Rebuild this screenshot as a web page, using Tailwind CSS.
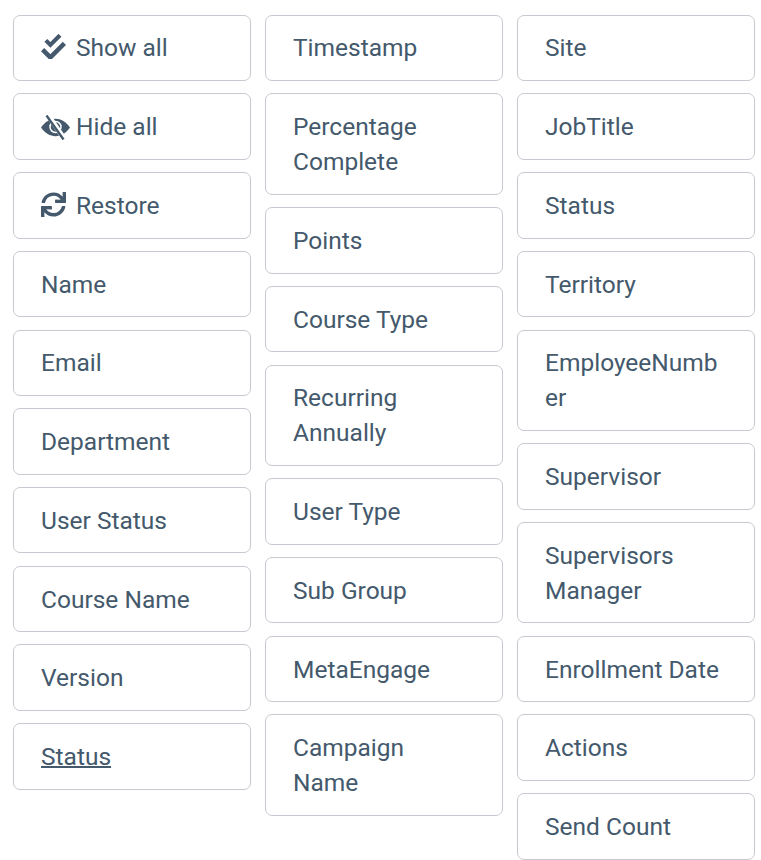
<!DOCTYPE html>
<html lang="en">
<head>
  <meta charset="UTF-8">
  <title>Columns</title>
  <script src="https://cdn.jsdelivr.net/npm/@tailwindcss/browser@4"></script>
</head>
<body class="bg-white font-['Roboto',sans-serif] text-[24.5px] leading-[35px] text-[#44596c]">
  <div class="flex items-start gap-[14px] pl-[13px] pt-[14.74px]">

    <!-- column 1 -->
    <div class="flex w-[238px] flex-col gap-[12.23px]">
      <div class="rounded-[7px] border border-[#c8c8d0] pt-[14.4px] pb-[15.1px] px-[27px]">
        <svg class="mr-[10px] inline-block h-[25px] w-[25px] align-[-3px]" viewBox="0 0 512 512" fill="none" stroke="currentColor"><path stroke-width="92" d="M32 320l160 160 288-288"/><path stroke-width="84" d="M100 130l92 92 196-196"/></svg>Show all
      </div>
      <div class="rounded-[7px] border border-[#c8c8d0] pt-[14.92px] pb-[14.58px] px-[27px]">
        <svg class="mr-[6px] inline-block h-[25px] w-[29px] align-[-5px]" viewBox="0 0 29 25"><path fill="currentColor" d="M0 12.5C4 7 9 3.8 14.5 3.8S25 7 29 12.5C25 18 20 21.2 14.5 21.2S4 18 0 12.5z"/><circle cx="14.5" cy="12" r="5.5" fill="none" stroke="white" stroke-width="1.5"/><path fill="none" stroke="white" stroke-width="5" d="M7 0l17 25"/><path fill="none" stroke="currentColor" stroke-width="2.4" d="M5.5 .5l17 24"/></svg>Hide all
      </div>
      <div class="rounded-[7px] border border-[#c8c8d0] pt-[14.92px] pb-[14.58px] px-[27px]">
        <svg class="mr-[10px] inline-block h-[25px] w-[25px] align-[-3px]" viewBox="0 0 512 512" fill="currentColor"><path d="M440.65 12.57l4 82.77A247.16 247.16 0 0 0 255.83 8C134.73 8 33.91 94.92 12.29 209.82A12 12 0 0 0 24.09 224h49.05a12 12 0 0 0 11.67-9.26 175.91 175.91 0 0 1 317-56.94l-101.46-4.86a12 12 0 0 0-12.57 12v47.41a12 12 0 0 0 12 12H500a12 12 0 0 0 12-12V12a12 12 0 0 0-12-12h-47.37a12 12 0 0 0-11.98 12.57zM255.83 432a175.61 175.61 0 0 1-146-77.8l101.8 4.87a12 12 0 0 0 12.57-12v-47.4a12 12 0 0 0-12-12H12a12 12 0 0 0-12 12V500a12 12 0 0 0 12 12h47.35a12 12 0 0 0 12-12.6l-4.15-82.57A247.17 247.17 0 0 0 255.83 504c121.11 0 221.93-86.92 243.55-201.82a12 12 0 0 0-11.8-14.18h-49.05a12 12 0 0 0-11.67 9.26A175.86 175.86 0 0 1 255.83 432z"/></svg>Restore
      </div>
      <div class="rounded-[7px] border border-[#c8c8d0] pt-[14.92px] pb-[14.58px] px-[27px]">Name</div>
      <div class="rounded-[7px] border border-[#c8c8d0] pt-[14.92px] pb-[14.58px] px-[27px]">Email</div>
      <div class="rounded-[7px] border border-[#c8c8d0] pt-[14.92px] pb-[14.58px] px-[27px]">Department</div>
      <div class="rounded-[7px] border border-[#c8c8d0] pt-[14.92px] pb-[14.58px] px-[27px]">User Status</div>
      <div class="rounded-[7px] border border-[#c8c8d0] pt-[14.92px] pb-[14.58px] px-[27px]">Course Name</div>
      <div class="rounded-[7px] border border-[#c8c8d0] pt-[14.92px] pb-[14.58px] px-[27px]">Version</div>
      <div class="rounded-[7px] border border-[#c8c8d0] pt-[14.92px] pb-[14.58px] px-[27px] underline decoration-2">Status</div>
    </div>

    <!-- column 2 -->
    <div class="flex w-[238px] flex-col gap-[12.23px]">
      <div class="rounded-[7px] border border-[#c8c8d0] pt-[14.4px] pb-[15.1px] px-[27px]">Timestamp</div>
      <div class="rounded-[7px] border border-[#c8c8d0] pt-[14.92px] pb-[14.58px] px-[27px]">Percentage Complete</div>
      <div class="rounded-[7px] border border-[#c8c8d0] pt-[14.92px] pb-[14.58px] px-[27px]">Points</div>
      <div class="rounded-[7px] border border-[#c8c8d0] pt-[14.92px] pb-[14.58px] px-[27px]">Course Type</div>
      <div class="rounded-[7px] border border-[#c8c8d0] pt-[14.92px] pb-[14.58px] px-[27px]">Recurring Annually</div>
      <div class="rounded-[7px] border border-[#c8c8d0] pt-[14.92px] pb-[14.58px] px-[27px]">User Type</div>
      <div class="rounded-[7px] border border-[#c8c8d0] pt-[14.92px] pb-[14.58px] px-[27px]">Sub Group</div>
      <div class="rounded-[7px] border border-[#c8c8d0] pt-[14.92px] pb-[14.58px] px-[27px]">MetaEngage</div>
      <div class="rounded-[7px] border border-[#c8c8d0] pt-[14.92px] pb-[14.58px] px-[27px]">Campaign Name</div>
    </div>

    <!-- column 3 -->
    <div class="flex w-[238px] flex-col gap-[12.23px]">
      <div class="rounded-[7px] border border-[#c8c8d0] pt-[14.4px] pb-[15.1px] px-[27px]">Site</div>
      <div class="rounded-[7px] border border-[#c8c8d0] pt-[14.92px] pb-[14.58px] px-[27px]">JobTitle</div>
      <div class="rounded-[7px] border border-[#c8c8d0] pt-[14.92px] pb-[14.58px] px-[27px]">Status</div>
      <div class="rounded-[7px] border border-[#c8c8d0] pt-[14.92px] pb-[14.58px] px-[27px]">Territory</div>
      <div class="rounded-[7px] border border-[#c8c8d0] pt-[14.92px] pb-[14.58px] px-[27px] break-words">EmployeeNumber</div>
      <div class="rounded-[7px] border border-[#c8c8d0] pt-[14.92px] pb-[14.58px] px-[27px]">Supervisor</div>
      <div class="rounded-[7px] border border-[#c8c8d0] pt-[14.92px] pb-[14.58px] px-[27px]">Supervisors Manager</div>
      <div class="rounded-[7px] border border-[#c8c8d0] pt-[14.92px] pb-[14.58px] px-[27px]">Enrollment Date</div>
      <div class="rounded-[7px] border border-[#c8c8d0] pt-[14.92px] pb-[14.58px] px-[27px]">Actions</div>
      <div class="rounded-[7px] border border-[#c8c8d0] pt-[14.92px] pb-[14.58px] px-[27px]">Send Count</div>
    </div>

  </div>
</body>
</html>
